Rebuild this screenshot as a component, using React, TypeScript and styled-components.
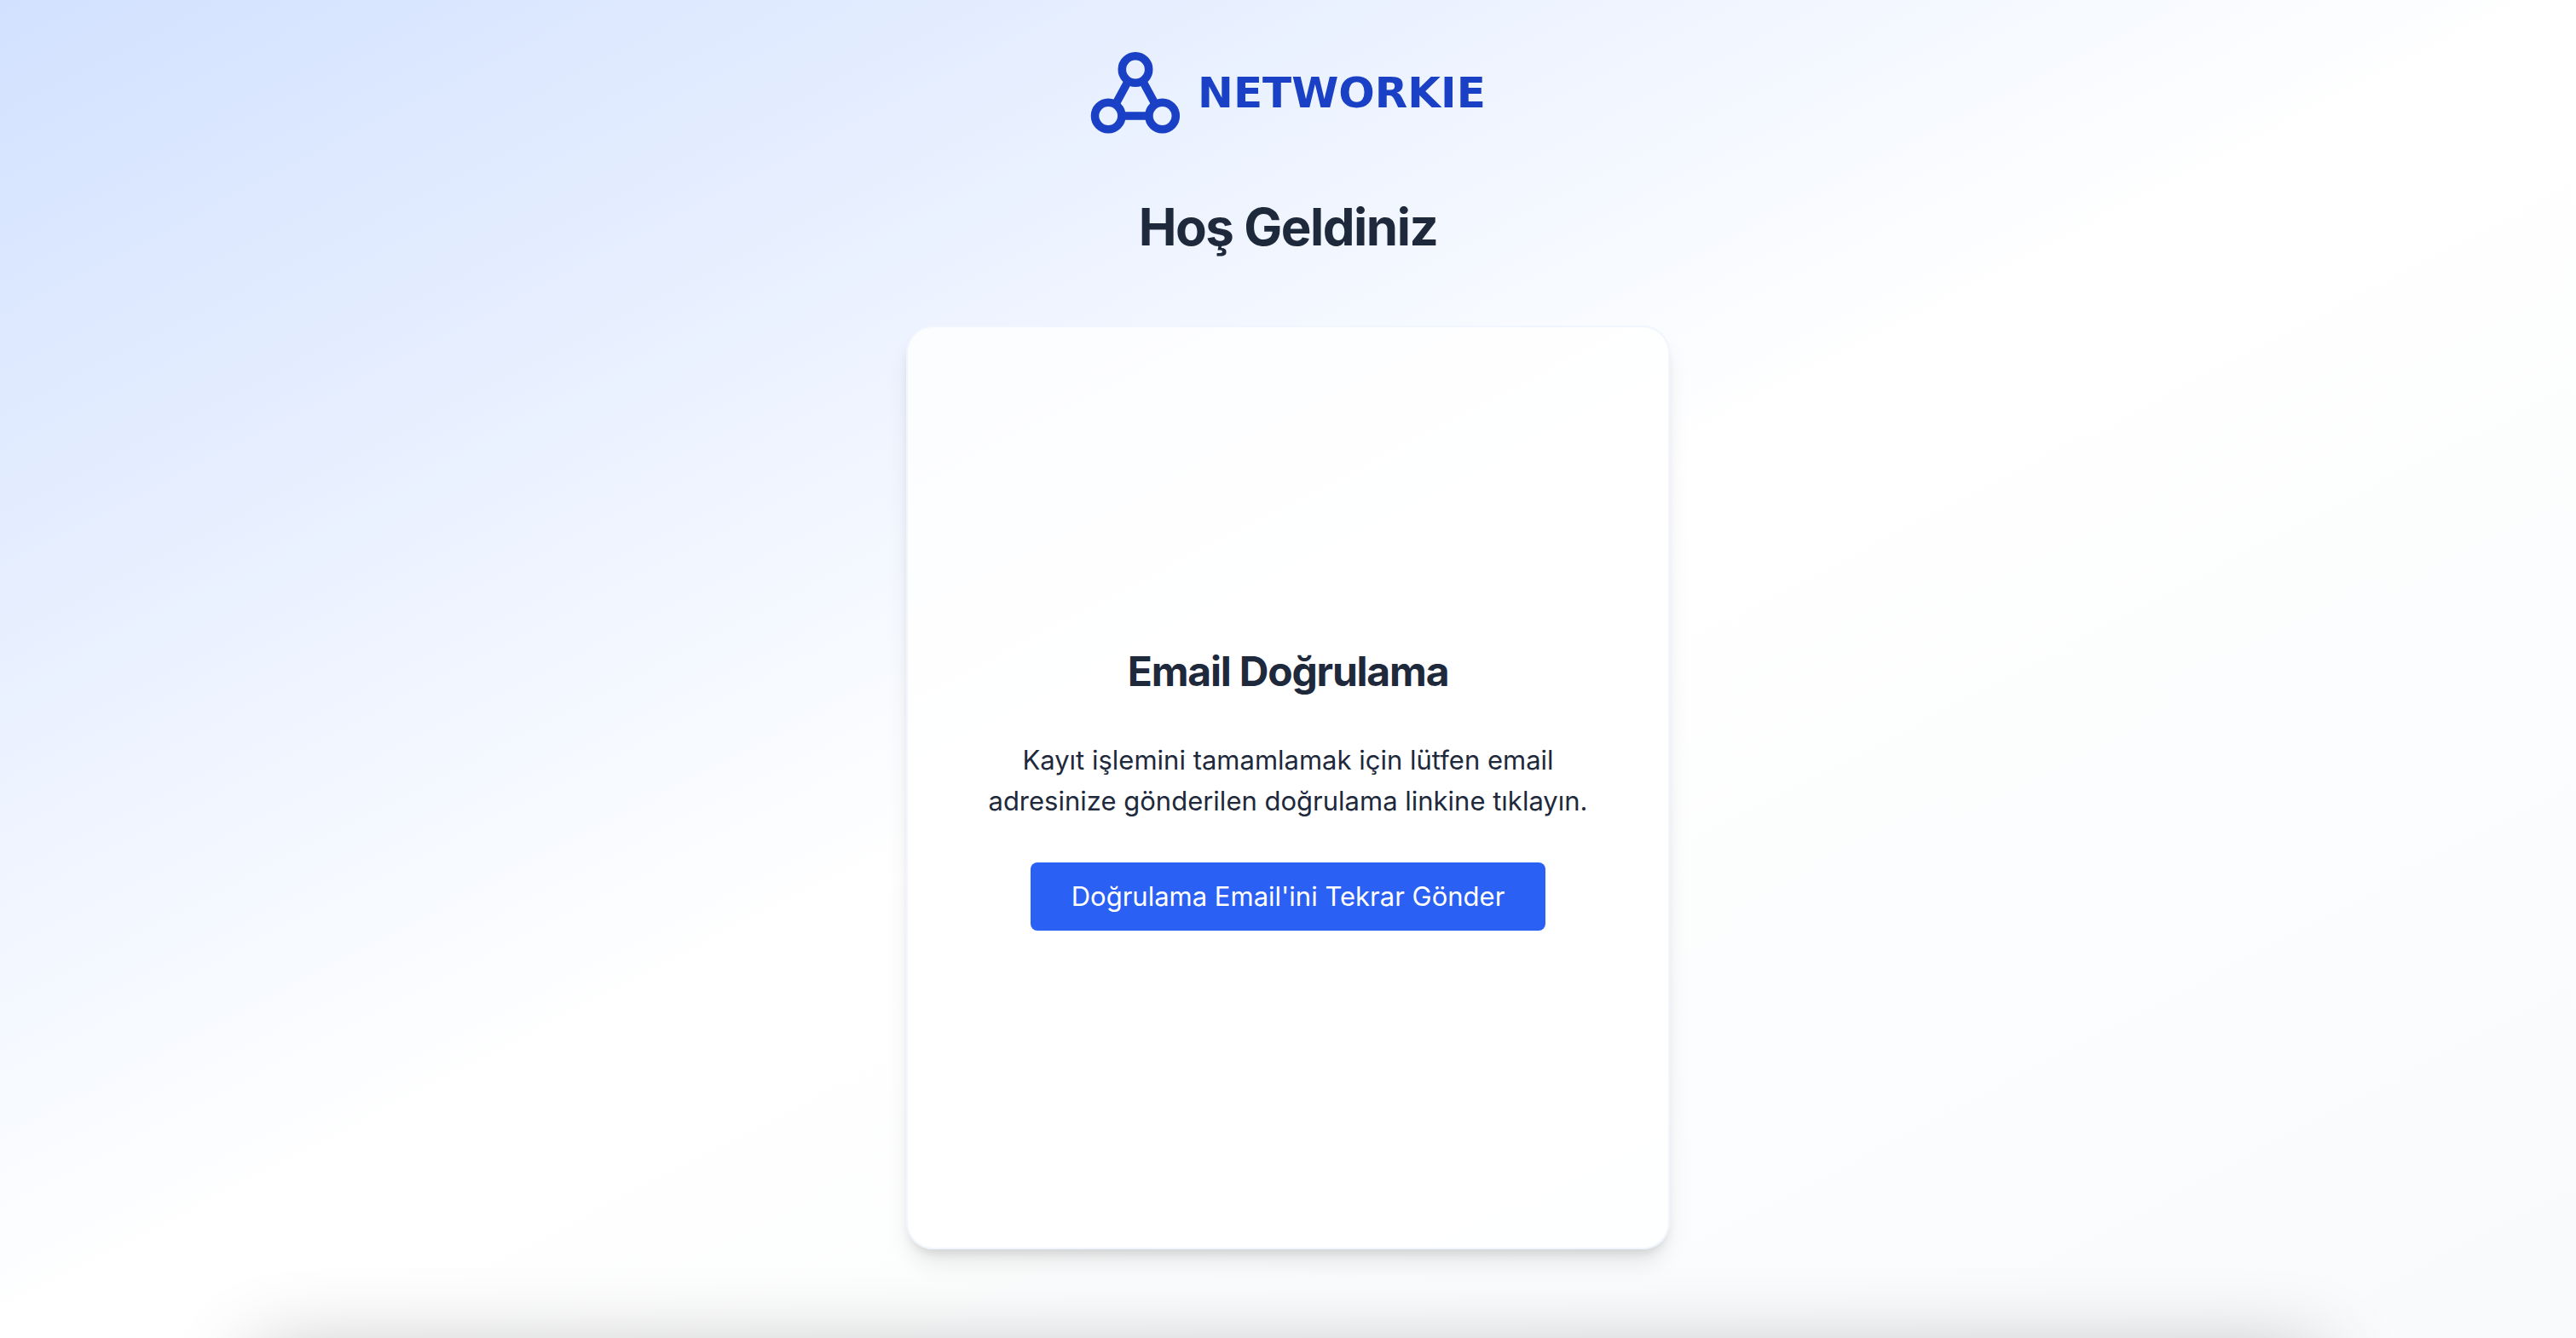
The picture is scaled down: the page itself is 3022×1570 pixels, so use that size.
import React from "react";
import styled, { createGlobalStyle } from "styled-components";

const GlobalStyle = createGlobalStyle`
  *, *::before, *::after { box-sizing: border-box; }
  html, body { margin: 0; padding: 0; }
  body {
    font-family: Inter, "Noto Sans", sans-serif;
    color: #1e293b;
    -webkit-font-smoothing: antialiased;
  }
  h1, h2, p { margin: 0; }
`;

const Page = styled.main`
  position: relative;
  overflow: hidden;
  min-height: 100vh;
  display: flex;
  flex-direction: column;
  align-items: center;
  padding: 60px 32px 104px;
  background: linear-gradient(to bottom right, #d2e1ff, #ffffff 50%, #f8fafc);
`;

const Brand = styled.a`
  display: flex;
  align-items: center;
  gap: 20px;
  color: #1a41c5;
  text-decoration: none;
`;

const BrandMark = styled.svg`
  display: block;
  width: 106px;
  height: 98px;
`;

const BrandName = styled.span`
  font-family: "DejaVu Sans", sans-serif;
  font-size: 50px;
  line-height: 64px;
  font-weight: 700;
`;

const Title = styled.h1`
  margin-top: 72px;
  font-size: 60px;
  line-height: 72px;
  font-weight: 700;
  letter-spacing: -0.025em;
  color: #1e293b;
`;

const Card = styled.section`
  flex: 1;
  width: 100%;
  max-width: 896px;
  margin-top: 80px;
  padding: 64px;
  display: flex;
  flex-direction: column;
  align-items: center;
  justify-content: center;
  text-align: center;
  background: rgba(255, 255, 255, 0.8);
  border: 2px solid #f1f5fd;
  border-radius: 32px;
  box-shadow: 0 20px 30px -6px rgba(0, 0, 0, 0.1), 0 8px 12px -4px rgba(0, 0, 0, 0.1);
`;

const CardTitle = styled.h2`
  font-size: 48px;
  line-height: 64px;
  font-weight: 700;
  letter-spacing: -0.025em;
`;

const Message = styled.p`
  max-width: 720px;
  margin-top: 48px;
  font-size: 31px;
  line-height: 48px;
`;

const ResendButton = styled.button`
  margin-top: 48px;
  padding: 16px 48px;
  border: 0;
  border-radius: 8px;
  background: #2b60f4;
  color: #ffffff;
  font: inherit;
  font-size: 31px;
  line-height: 48px;
  cursor: pointer;
`;

const BottomShade = styled.div`
  position: absolute;
  top: calc(100% + 24px);
  left: 10%;
  right: 10%;
  height: 80px;
  box-shadow: 0 0 100px rgba(0, 0, 0, 0.3);
`;

const Logo = () => (
  <Brand href="#">
    <BrandMark viewBox="0 0 106 98" fill="none" stroke="currentColor" strokeWidth="9.6" aria-hidden="true">
      <path d="M44 36 31 60M62 36 75 60M41 76H65" />
      <circle cx="53" cy="21.5" r="15.7" />
      <circle cx="21.2" cy="76" r="15.7" />
      <circle cx="84.6" cy="76" r="15.7" />
    </BrandMark>
    <BrandName>NETWORKIE</BrandName>
  </Brand>
);

export default function App() {
  return (
    <>
      <GlobalStyle />
      <Page>
        <Logo />
        <Title>Hoş Geldiniz</Title>
        <Card>
          <CardTitle>Email Doğrulama</CardTitle>
          <Message>
            Kayıt işlemini tamamlamak için lütfen email adresinize gönderilen doğrulama linkine tıklayın.
          </Message>
          <ResendButton type="button">Doğrulama Email'ini Tekrar Gönder</ResendButton>
        </Card>
        <BottomShade />
      </Page>
    </>
  );
}
